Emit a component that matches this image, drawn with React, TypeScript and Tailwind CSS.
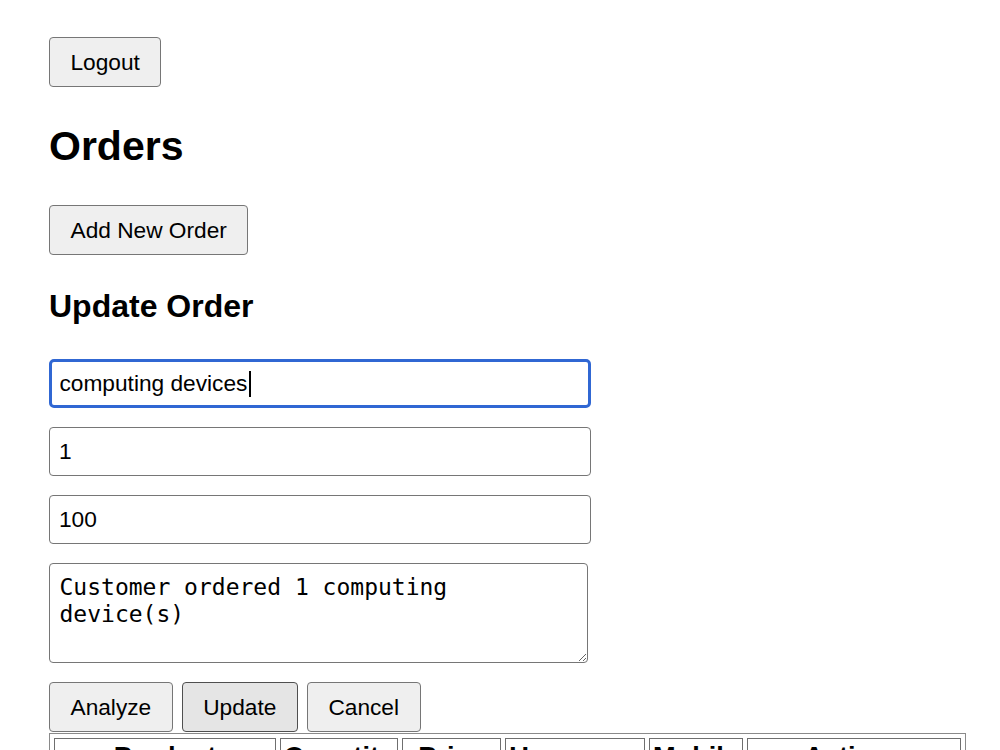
import React from "react";

type Order = {
  id: number;
  product: string;
  quantity: number;
  price: number;
  username: string;
  mobile: string;
};

const orders: Order[] = [
  { id: 1, product: "computing devices", quantity: 1, price: 100, username: "john", mobile: "9876543210" },
];

const btn =
  "h-[50px] px-[20.5px] rounded-[4px] border-[1.5px] border-[#767676] bg-[#efefef] text-[22.7px] text-black";

const field =
  "w-[542px] h-[49px] rounded-[4px] border-[1.5px] border-[#767676] bg-white pl-[9px] text-[22.7px] text-black outline-none";

const cell = "border-[1.5px] border-[#6f6f6f] p-[2px] text-[27.2px] leading-[31px]";

const App: React.FC = () => {
  return (
    <div className="min-h-screen bg-white px-[49px] pt-[37px] pb-10 font-['Liberation_Sans',Arial,sans-serif] text-black">
      <button className={btn}>Logout</button>

      <h2 className="mt-[36px] text-[41px] leading-[47px] font-bold">Orders</h2>

      <button className={`${btn} mt-[35px]`}>Add New Order</button>

      <h3 className="mt-[33px] text-[32px] leading-[37px] font-bold">Update Order</h3>

      <div className="mt-[34px] flex flex-col gap-[19px]">
        <div className="relative w-[542px]">
          <input
            readOnly
            value="computing devices"
            className="w-[542px] h-[49px] rounded-[5px] border-[3px] border-[#3067d3] bg-white pl-[7.5px] text-[22.7px] text-black outline-none"
          />
          <span className="absolute left-[200px] top-[12px] h-[26px] w-[1.5px] bg-black" />
        </div>
        <input readOnly value="1" className={field} />
        <input readOnly value="100" className={field} />
        <textarea
          readOnly
          value="Customer ordered 1 computing device(s)"
          className="w-[539px] h-[100px] rounded-[4px] border-[1.5px] border-[#767676] bg-white pl-[9.5px] pr-[9.5px] pt-[10px] text-[23px] leading-[27px] text-black outline-none font-['DejaVu_Sans_Mono',monospace]"
        />
        <div className="flex gap-[9px]">
          <button className={btn}>Analyze</button>
          <button className="h-[50px] px-[20.5px] rounded-[4px] border-[1.5px] border-[#4f4f4f] bg-[#e5e5e5] text-[22.7px] text-black">
            Update
          </button>
          <button className={btn}>Cancel</button>
        </div>
      </div>

      <table className="mt-[1px] w-[917px] table-fixed border-separate border-spacing-[4px] border-[1.5px] border-[#8a8a8a]">
        <thead>
          <tr>
            <th className={`${cell} w-[222px] font-bold`}>Product</th>
            <th className={`${cell} w-[118px] font-bold`}>Quantity</th>
            <th className={`${cell} w-[99px] font-bold`}>Price</th>
            <th className={`${cell} w-[140px] font-bold`}>Username</th>
            <th className={`${cell} w-[94px] font-bold`}>Mobile</th>
            <th className={`${cell} w-[214px] font-bold`}>Actions</th>
          </tr>
        </thead>
        <tbody>
          {orders.map((o) => (
            <tr key={o.id}>
              <td className={cell}>{o.product}</td>
              <td className={cell}>{o.quantity}</td>
              <td className={cell}>{o.price}</td>
              <td className={cell}>{o.username}</td>
              <td className={cell}>{o.mobile}</td>
              <td className={cell}>
                <div className="flex gap-[9px]">
                  <button className={btn}>Edit</button>
                  <button className={btn}>Delete</button>
                </div>
              </td>
            </tr>
          ))}
        </tbody>
      </table>
    </div>
  );
};

export default App;
